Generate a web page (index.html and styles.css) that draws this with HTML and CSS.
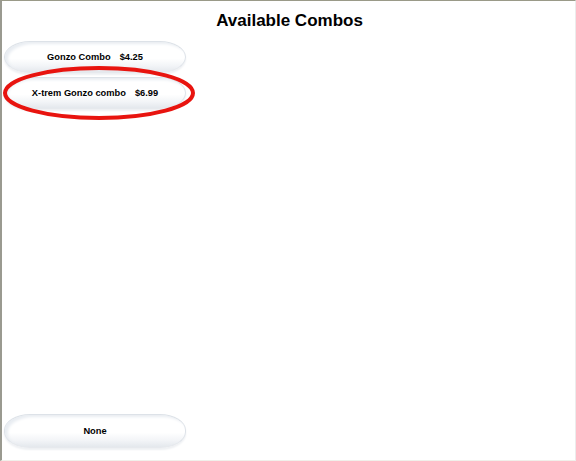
FILE: index.html
```html
<!DOCTYPE html>
<html lang="en">
<head>
    <meta charset="UTF-8">
    <title>Available Combos</title>
    <link rel="stylesheet" href="styles.css">
</head>
<body>
    <div class="frame">
        <h1>Available Combos</h1>
        <div class="combo-list">
            <button class="combo">Gonzo Combo<span class="price">$4.25</span></button>
            <div class="highlighted">
                <button class="combo">X-trem Gonzo combo<span class="price">$6.99</span></button>
                <svg class="ring" width="196" height="56" viewBox="0 0 196 56">
                    <ellipse cx="97" cy="28" rx="94" ry="25" fill="none" stroke="#e8140f" stroke-width="4"/>
                </svg>
            </div>
        </div>
        <div class="spacer"></div>
        <button class="combo none">None</button>
    </div>
</body>
</html>
```

FILE: styles.css
```css
html, body {
    margin: 0;
    height: 100%;
}
body {
    font-family: "Liberation Sans", Arial, sans-serif;
    background: #fff;
}
.frame {
    box-sizing: border-box;
    height: 461px;
    width: 576px;
    border-top: 1px solid #9a9a88;
    border-left: 2px solid #9a9a90;
    border-right: 1px solid #ececec;
    border-bottom: 1px solid #f0f0ea;
    display: flex;
    flex-direction: column;
    padding: 0 0 12px 2px;
}
h1 {
    margin: 10px 0 0;
    text-align: center;
    font-size: 17px;
    line-height: 20px;
    font-weight: bold;
    color: #000;
}
.combo-list {
    display: flex;
    flex-direction: column;
    gap: 4px;
    margin-top: 10px;
}
.combo {
    width: 182px;
    height: 32px;
    border: 1px solid #dde2e8;
    border-bottom-color: #e6e9ed;
    border-radius: 26px / 16px;
    background: linear-gradient(#ffffff 0%, #ffffff 55%, #f2f4f7 80%, #e4e8ed 100%);
    box-shadow: inset 3px 2px 3px #e9edf2, 0 2px 2px #eef0f3;
    font-family: "Liberation Sans", Arial, sans-serif;
    font-size: 9.3px;
    font-weight: bold;
    color: #000;
    padding: 0;
    text-align: center;
    cursor: pointer;
}
.price {
    margin-left: 9px;
}
.highlighted {
    position: relative;
}
.ring {
    position: absolute;
    left: -2px;
    top: -12px;
}
.spacer {
    flex: 1;
}
.none {
    height: 34px;
}
```
